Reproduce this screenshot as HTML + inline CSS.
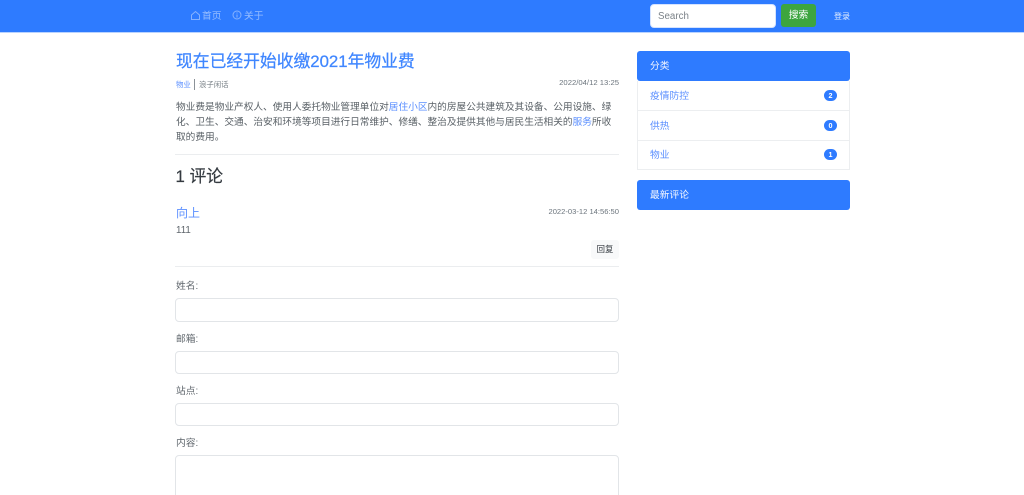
<!DOCTYPE html>
<html lang="zh-CN">
<head>
<meta charset="utf-8">
<title>现在已经开始收缴2021年物业费</title>
<style>
html,body{margin:0;padding:0;width:1024px;height:495px;overflow:hidden;background:#fff}
body{font-family:"Liberation Sans","Noto Sans CJK SC",sans-serif;color:#495057;position:relative}
.a{position:absolute;white-space:nowrap}
a{color:#5b8fff;text-decoration:none}
.nav{position:absolute;left:0;top:0;width:1024px;height:32px;background:#2e7bff;border-bottom:1px solid #b9d3ff}
.inp{position:absolute;left:175px;width:442px;background:#fff;border:1px solid #e2e5e8;border-radius:4px}
.lab{font-size:9.75px;line-height:14px;color:#5f666c;left:176px}
hr{position:absolute;margin:0;border:0;height:1px;background:#ebedef;left:175px;width:444px}
.head{position:absolute;left:637px;width:213px;height:30px;background:#2e7bff;border-radius:3px;color:#f2f6ff;font-size:9.75px;line-height:31px}
.head span{margin-left:13px}
.row{position:absolute;left:637px;width:211px;height:29px;border-left:1px solid #eceef0;border-right:1px solid #eceef0;border-bottom:1px solid #eceef0;font-size:9.75px;line-height:31px}
.row a{margin-left:12px}
.badge{position:absolute;right:12px;top:9px;width:13px;height:11px;border-radius:6px;background:#2e7bff;color:#fff;font-size:7.2px;font-weight:bold;line-height:11px;text-align:center}
</style>
</head>
<body>
<div class="nav"></div>
<svg class="a" style="left:190px;top:10px" width="11" height="11" viewBox="0 0 11 11" fill="none" stroke="#86b2ff" stroke-width="1"><path d="M1.5 5 5.5 1.5 9.5 5V9.5H1.5Z"/></svg>
<div class="a" style="left:202px;top:9px;font-size:9.75px;line-height:15px;color:#97bdff">首页</div>
<svg class="a" style="left:232px;top:10px" width="10" height="10" viewBox="0 0 10 10" fill="none" stroke="#86b2ff" stroke-width="1"><circle cx="5" cy="5" r="4"/><path d="M5 4.5V7.5M5 2.5V3.5"/></svg>
<div class="a" style="left:244px;top:9px;font-size:9.75px;line-height:15px;color:#97bdff">关于</div>
<div class="a" style="left:650px;top:4px;width:124px;height:22px;background:#fff;border:1px solid #d5e3ff;border-radius:4px;font-size:9.75px;line-height:24px;color:#7b8288"><span style="margin-left:7px">Search</span></div>
<div class="a" style="left:781px;top:4px;width:35px;height:23px;background:#3da53f;border-radius:3px;color:#fff;font-size:9.75px;line-height:24px;text-align:center">搜索</div>
<div class="a" style="left:834px;top:11px;font-size:8px;line-height:11px;color:#e8f0ff">登录</div>

<div class="a" style="left:176px;top:50px;font-size:16.8px;line-height:23px;-webkit-text-stroke:.25px #3f86ff"><a style="color:#3f86ff">现在已经开始收缴2021年物业费</a></div>
<div class="a" style="left:176px;top:79px;font-size:7.4px;line-height:11px;color:#6c757d"><a>物业</a></div>
<div class="a" style="left:194px;top:79px;width:1px;height:11px;background:#8b9298"></div>
<div class="a" style="left:199px;top:79px;font-size:7.4px;line-height:11px;color:#7a8288">浪子闲话</div>
<div class="a" style="right:405px;top:77px;font-size:7.7px;line-height:11px;color:#6c757d">2022/04/12 13:25</div>
<div class="a" style="left:176px;top:100px;width:443px;font-size:9.68px;line-height:15px;color:#5a6167;white-space:normal">物业费是物业产权人、使用人委托物业管理单位对<a>居住小区</a>内的房屋公共建筑及其设备、公用设施、绿化、卫生、交通、治安和环境等项目进行日常维护、修缮、整治及提供其他与居民生活相关的<a>服务</a>所收取的费用。</div>
<hr style="top:154px">
<div class="a" style="left:175.5px;top:165px;font-size:16.8px;line-height:23px;color:#343a40;-webkit-text-stroke:.2px #343a40">1 评论</div>
<div class="a" style="left:176px;top:205px;font-size:12px;line-height:17px"><a>向上</a></div>
<div class="a" style="right:405px;top:206px;font-size:7.6px;line-height:11px;color:#6c757d">2022-03-12 14:56:50</div>
<div class="a" style="left:176px;top:224px;font-size:9.75px;line-height:14px;color:#5f666c">111</div>
<div class="a" style="left:591px;top:240px;width:28px;height:19px;background:#f8f9fa;border-radius:3px;font-size:8.4px;line-height:19px;text-align:center;color:#343a40">回复</div>
<hr style="top:266px">
<div class="a lab" style="top:280px">姓名:</div>
<div class="inp" style="top:298px;height:22px"></div>
<div class="a lab" style="top:333px">邮箱:</div>
<div class="inp" style="top:351px;height:21px"></div>
<div class="a lab" style="top:385px">站点:</div>
<div class="inp" style="top:403px;height:21px"></div>
<div class="a lab" style="top:437px">内容:</div>
<div class="inp" style="top:455px;height:60px"></div>

<div class="head" style="top:51px"><span>分类</span></div>
<div class="row" style="top:81px"><a>疫情防控</a><div class="badge">2</div></div>
<div class="row" style="top:111px"><a>供热</a><div class="badge">0</div></div>
<div class="row" style="top:140px"><a>物业</a><div class="badge">1</div></div>
<div class="head" style="top:180px"><span>最新评论</span></div>
</body>
</html>
